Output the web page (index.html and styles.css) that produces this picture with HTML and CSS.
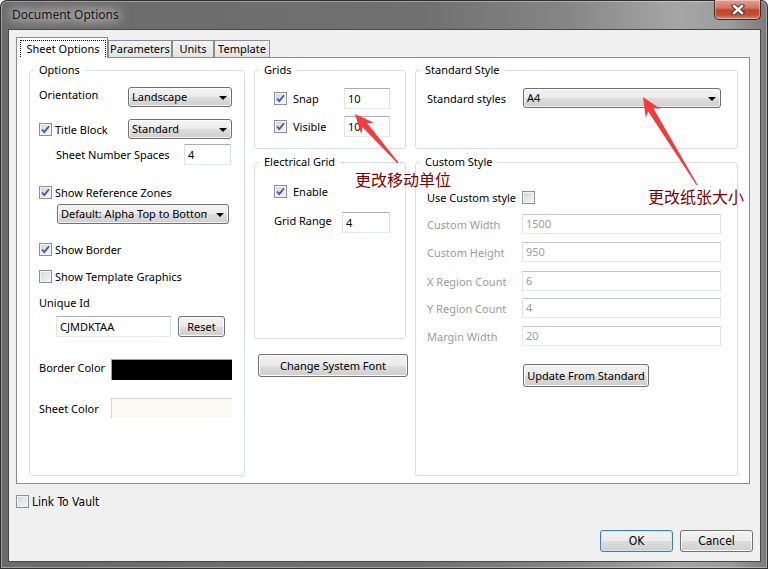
FILE: index.html
```html
<!DOCTYPE html>
<html>
<head>
    <title>Document Options</title>
    <meta charset="utf-8">
    <link rel="stylesheet" href="styles.css">
</head>
<body>
    <div class="window">
        <div class="titlebar">
            <span class="title">Document Options</span>
            <span class="close">
                <svg width="14" height="11" viewBox="0 0 14 11">
                    <path d="M3 2 L11 9 M11 2 L3 9" stroke="#3b3b3b" stroke-width="4.4" stroke-linecap="square"/>
                    <path d="M3 2 L11 9 M11 2 L3 9" stroke="#fff" stroke-width="2.4" stroke-linecap="square"/>
                </svg>
            </span>
        </div>

        <div class="client">
            <div class="tabs">
                <span class="tab active"><span class="focus">Sheet Options</span></span>
                <span class="tab params">Parameters</span>
                <span class="tab units">Units</span>
                <span class="tab template">Template</span>
            </div>

            <div class="page">
                <!-- left column -->
                <fieldset class="group options">
                    <legend>Options</legend>
                    <div class="row orient">
                        <span class="lbl w89 raised">Orientation</span>
                        <span class="combo w104">Landscape</span>
                    </div>
                    <div class="row title-block">
                        <span class="chk-label w89">
                            <span class="check"><svg width="11" height="11" viewBox="0 0 11 11"><path d="M2 5.5 L4.3 8 L9 2.2" fill="none" stroke="#3d5a98" stroke-width="1.8"/></svg></span>
                            Title Block
                        </span>
                        <span class="combo w104">Standard</span>
                    </div>
                    <div class="row sheet-spaces">
                        <span class="lbl w128">Sheet Number Spaces</span>
                        <span class="edit w47">4</span>
                    </div>
                    <div class="row ref-zones">
                        <span class="chk-label">
                            <span class="check"><svg width="11" height="11" viewBox="0 0 11 11"><path d="M2 5.5 L4.3 8 L9 2.2" fill="none" stroke="#3d5a98" stroke-width="1.8"/></svg></span>
                            Show Reference Zones
                        </span>
                    </div>
                    <div class="row zone-style">
                        <span class="combo w172"><span class="clip">Default: Alpha Top to Bottom</span></span>
                    </div>
                    <div class="row show-border">
                        <span class="chk-label">
                            <span class="check"><svg width="11" height="11" viewBox="0 0 11 11"><path d="M2 5.5 L4.3 8 L9 2.2" fill="none" stroke="#3d5a98" stroke-width="1.8"/></svg></span>
                            Show Border
                        </span>
                    </div>
                    <div class="row show-template">
                        <span class="chk-label">
                            <span class="check"></span>
                            Show Template Graphics
                        </span>
                    </div>
                    <div class="row unique-label">
                        <span class="lbl">Unique Id</span>
                    </div>
                    <div class="row unique-id">
                        <span class="edit w115">CJMDKTAA</span>
                        <span class="btn reset">Reset</span>
                    </div>
                    <div class="row border-color">
                        <span class="lbl w72 raised">Border Color</span>
                        <span class="swatch black"></span>
                    </div>
                    <div class="row sheet-color">
                        <span class="lbl w72">Sheet Color</span>
                        <span class="swatch sheet"></span>
                    </div>
                </fieldset>

                <!-- middle column -->
                <div class="col">
                    <fieldset class="group grids">
                        <legend>Grids</legend>
                        <div class="row snap">
                            <span class="chk-label w70 wide-gap">
                                <span class="check"><svg width="11" height="11" viewBox="0 0 11 11"><path d="M2 5.5 L4.3 8 L9 2.2" fill="none" stroke="#3d5a98" stroke-width="1.8"/></svg></span>
                                Snap
                            </span>
                            <span class="edit w46">10</span>
                        </div>
                        <div class="row visible">
                            <span class="chk-label w70 wide-gap">
                                <span class="check"><svg width="11" height="11" viewBox="0 0 11 11"><path d="M2 5.5 L4.3 8 L9 2.2" fill="none" stroke="#3d5a98" stroke-width="1.8"/></svg></span>
                                Visible
                            </span>
                            <span class="edit w46">10</span>
                        </div>
                    </fieldset>
                    <fieldset class="group electrical">
                        <legend>Electrical Grid</legend>
                        <div class="row enable">
                            <span class="chk-label wide-gap">
                                <span class="check"><svg width="11" height="11" viewBox="0 0 11 11"><path d="M2 5.5 L4.3 8 L9 2.2" fill="none" stroke="#3d5a98" stroke-width="1.8"/></svg></span>
                                Enable
                            </span>
                        </div>
                        <div class="row grid-range">
                            <span class="lbl w68 raised">Grid Range</span>
                            <span class="edit w48">4</span>
                        </div>
                    </fieldset>
                    <span class="btn font-btn">Change System Font</span>
                </div>

                <!-- right column -->
                <div class="col">
                    <fieldset class="group standard">
                        <legend>Standard Style</legend>
                        <div class="row std-styles">
                            <span class="lbl w96">Standard styles</span>
                            <span class="combo w198">A4</span>
                        </div>
                    </fieldset>
                    <fieldset class="group custom">
                        <legend>Custom Style</legend>
                        <div class="row use-custom">
                            <span class="lbl w95">Use Custom style</span>
                            <span class="check"></span>
                        </div>
                        <div class="row c-width">
                            <span class="lbl w95 off">Custom Width</span>
                            <span class="edit w199 off">1500</span>
                        </div>
                        <div class="row c-height">
                            <span class="lbl w95 off">Custom Height</span>
                            <span class="edit w199 off">950</span>
                        </div>
                        <div class="row x-region">
                            <span class="lbl w95 off">X Region Count</span>
                            <span class="edit w199 off">6</span>
                        </div>
                        <div class="row y-region">
                            <span class="lbl w95 off">Y Region Count</span>
                            <span class="edit w199 off">4</span>
                        </div>
                        <div class="row margin-width">
                            <span class="lbl w95 off">Margin Width</span>
                            <span class="edit w199 off">20</span>
                        </div>
                        <div class="row update">
                            <span class="btn update-btn">Update From Standard</span>
                        </div>
                    </fieldset>
                </div>
            </div>

            <div class="vault">
                <span class="check"></span>
                <span>Link To Vault</span>
            </div>

            <div class="actions">
                <span class="btn narrow default">OK</span>
                <span class="btn narrow">Cancel</span>
            </div>
        </div>

        <!-- callouts drawn on top of the dialog -->
        <svg class="arrows" width="768" height="569" viewBox="0 0 768 569">
            <polygon points="355,114 373.9,122.7 367.2,123.3 398.5,162.6 397.5,163.4 362.6,127.3 361.1,133.9" fill="#f23c3c"/>
            <polygon points="643,97 660.2,108.8 653.4,108.2 697.5,184.7 696.5,185.3 648.2,111.4 645.7,117.7" fill="#f23c3c"/>
        </svg>
        <span class="note note-grid">更改移动单位</span>
        <span class="note note-paper">更改纸张大小</span>
    </div>
</body>
</html>
```

FILE: styles.css
```css
* {
    box-sizing: border-box;
}
body {
    margin: 0;
    font-family: "Noto Sans", sans-serif;
    font-size: 11px;
    color: #000;
    background: #fff;
}

/* window frame */
.window {
    position: relative;
    width: 768px;
    height: 569px;
    padding: 0 7px 7px 8px;
    display: flex;
    flex-direction: column;
    border-radius: 7px 7px 0 0;
    background: linear-gradient(90deg, #6b6b6b 0%, #707070 55%, #868686 74%, #a6a6a6 88%, #9c9c9c 95%, #7a7a7a 100%);
    box-shadow: inset 0 0 0 1px #2e2e2e, inset 0 0 0 2px rgba(255, 255, 255, 0.35);
}
.titlebar {
    height: 29px;
    margin: 0 -7px 0 -8px;
    padding: 0 7px 0 12px;
    display: flex;
    justify-content: space-between;
    align-items: flex-start;
}
.title {
    margin-top: 6px;
    line-height: 17px;
    font-size: 12px;
    color: #151515;
    text-shadow: 0 0 8px #fff, 0 0 14px rgba(255, 255, 255, 0.9), 0 0 20px rgba(255, 255, 255, 0.6);
}
.close {
    width: 47px;
    height: 20px;
    display: flex;
    align-items: center;
    justify-content: center;
    border: 1px solid #4a2620;
    border-top: 0;
    border-radius: 0 0 5px 5px;
    background: linear-gradient(#e2a293 0%, #d57660 40%, #c1442c 55%, #c65038 80%, #d98e7c 100%);
    box-shadow: inset 0 0 0 1px rgba(255, 255, 255, 0.35);
}

.client {
    flex: 1;
    display: flex;
    flex-direction: column;
    background: #f0f0f0;
    border: 1px solid #464646;
}

/* tab strip */
.tabs {
    position: relative;
    z-index: 1;
    height: 20px;
    margin: 7px 0 0 7px;
    display: flex;
    align-items: flex-end;
}
.tab {
    height: 17px;
    border: 1px solid #898c95;
    border-bottom: 0;
    background: linear-gradient(#f3f3f3, #e3e3e3);
    text-align: center;
    line-height: 15px;
}
.tab.active {
    width: 92px;
    height: 21px;
    margin-bottom: -1px;
    background: #fff;
    padding: 2px 1px 0 3px;
}
.focus {
    display: block;
    height: 17px;
    line-height: 15px;
    border: 1px dotted #000;
    border-bottom: 0;
}
.tab.params { width: 64px; }
.tab.units { width: 42px; }
.tab.template { width: 56px; }

.page {
    height: 427px;
    margin: 0 10px 0 7px;
    padding: 5px 11px 7px 12px;
    display: grid;
    grid-template-columns: 216px 152px 323px;
    column-gap: 9px;
    background: #fff;
    border: 1px solid #898c95;
}
.col {
    display: flex;
    flex-direction: column;
}

/* group boxes */
.group {
    margin: 0;
    padding: 0;
    min-width: 0;
    border: 1px solid #d5dfe5;
    border-radius: 3px;
}
.group legend {
    margin-left: 4px;
    padding: 0 5px;
    line-height: 14px;
}
.options { height: 413px; }
.grids, .standard { height: 86px; flex: none; }
.electrical { height: 184px; margin-top: 6px; flex: none; }
.custom { margin-top: 6px; flex: 1; }

.row {
    display: flex;
    align-items: center;
}
.options .row { padding-left: 9px; }
.grids .row, .electrical .row { padding-left: 19px; }
.standard .row, .custom .row { padding-left: 11px; }

.orient { margin-top: 10px; height: 20px; }
.title-block { margin-top: 12px; height: 20px; }
.options .sheet-spaces { margin-top: 5px; height: 21px; padding-left: 26px; }
.ref-zones { margin-top: 21px; height: 13px; }
.options .zone-style { margin-top: 5px; height: 20px; padding-left: 27px; }
.show-border { margin-top: 19px; height: 13px; }
.show-template { margin-top: 14px; height: 13px; }
.unique-label { margin-top: 12px; height: 14px; }
.options .unique-id { margin-top: 7px; height: 21px; padding-left: 26px; gap: 7px; }
.border-color { margin-top: 22px; height: 21px; }
.sheet-color { margin-top: 18px; height: 20px; }

.snap { margin-top: 11px; height: 21px; }
.visible { margin-top: 7px; height: 21px; }
.enable { margin-top: 16px; height: 13px; }
.grid-range { margin-top: 14px; height: 21px; }

.std-styles { margin-top: 11px; height: 20px; }
.use-custom { margin-top: 22px; height: 13px; }
.c-width { margin-top: 10px; height: 20px; }
.c-height { margin-top: 8px; height: 20px; }
.x-region { margin-top: 9px; height: 20px; }
.y-region { margin-top: 7px; height: 20px; }
.margin-width { margin-top: 8px; height: 20px; }
.custom .update { margin-top: 18px; height: 23px; padding-left: 107px; }

/* fixed label / control widths */
.w47 { width: 47px; }
.w46 { width: 46px; }
.w48 { width: 48px; }
.w68 { width: 68px; }
.w70 { width: 70px; }
.w72 { width: 72px; }
.w89 { width: 89px; }
.w95 { width: 95px; }
.w96 { width: 96px; }
.w104 { width: 104px; }
.w115 { width: 115px; }
.w128 { width: 128px; }
.w172 { width: 172px; }
.w198 { width: 198px; }
.w199 { width: 199px; }

.lbl, .chk-label {
    flex: none;
    white-space: nowrap;
}
/* labels that sit a little above their control's middle */
.lbl.raised { padding-bottom: 5px; }
.chk-label {
    display: flex;
    align-items: center;
    gap: 3px;
}
.chk-label.wide-gap { gap: 6px; }
.off { color: #9c9c9c; }

/* controls */
.check {
    width: 13px;
    height: 13px;
    flex: none;
    display: inline-flex;
    align-items: center;
    justify-content: center;
    border: 1px solid #8e8f8f;
    background: linear-gradient(135deg, #d0d4da, #f7f7f7);
    box-shadow: inset 0 0 0 1px #f4f4f4;
}
.edit {
    flex: none;
    height: 21px;
    padding: 0 3px;
    line-height: 19px;
    background: #fff;
    border: 1px solid;
    border-color: #abadb3 #dbdfe6 #e3e9ef #e2e3ea;
}
.custom .edit { height: 20px; line-height: 18px; }
.edit.off { border-color: #c4c6cb #dfe1e5 #e5e8ec #e2e3e7; }

.combo {
    position: relative;
    flex: none;
    height: 20px;
    padding: 0 18px 0 3px;
    line-height: 18px;
    white-space: nowrap;
    overflow: hidden;
    border: 1px solid #707070;
    border-radius: 3px;
    background: linear-gradient(#f3f3f3 0%, #ebebeb 50%, #dddddd 51%, #cfcfcf 100%);
    box-shadow: inset 0 0 0 1px rgba(255, 255, 255, 0.7);
}
.combo::after {
    content: "";
    position: absolute;
    right: 4px;
    top: 8px;
    border-left: 4px solid transparent;
    border-right: 4px solid transparent;
    border-top: 4px solid #000;
}
.clip {
    display: block;
    width: 146px;
    overflow: hidden;
}

.btn {
    flex: none;
    height: 21px;
    text-align: center;
    line-height: 19px;
    white-space: nowrap;
    border: 1px solid #707070;
    border-radius: 3px;
    background: linear-gradient(#f2f2f2 0%, #ebebeb 50%, #dddddd 51%, #cfcfcf 100%);
    box-shadow: inset 0 0 0 1px #fbfbfb;
}
.reset { width: 47px; }
.font-btn {
    width: 150px;
    height: 23px;
    line-height: 21px;
    margin: 15px 0 0 4px;
}
.update-btn {
    width: 126px;
    height: 23px;
    line-height: 21px;
}

.swatch {
    width: 121px;
    height: 21px;
    border-top: 1px solid #a0a0a0;
    border-left: 1px solid #a0a0a0;
}
.swatch.black { background: #000; }
.swatch.sheet { height: 20px; background: #fdfaf6; border-color: #d6d6d6; }

/* footer */
.vault {
    height: 13px;
    margin: 11px 0 0 7px;
    display: flex;
    align-items: center;
    gap: 3px;
    font-family: "DejaVu Sans Condensed", "DejaVu Sans", sans-serif;
    font-stretch: condensed;
    font-size: 12px;
}
.actions {
    margin-top: 22px;
    padding-right: 7px;
    display: flex;
    justify-content: flex-end;
    gap: 7px;
}
.btn.narrow {
    width: 73px;
    height: 22px;
    line-height: 20px;
    font-family: "DejaVu Sans Condensed", "DejaVu Sans", sans-serif;
    font-stretch: condensed;
    font-size: 12px;
}
.btn.default {
    border-color: #3c7fb1;
    box-shadow: inset 0 0 0 1px #c8e8f8;
}

/* annotations */
.arrows {
    position: absolute;
    left: 0;
    top: 0;
    pointer-events: none;
}
.note {
    position: absolute;
    font-family: "Noto Sans CJK SC", sans-serif;
    font-size: 16px;
    line-height: 16px;
    color: #7d0000;
    white-space: nowrap;
}
.note-grid { left: 355px; top: 171px; }
.note-paper { left: 648px; top: 188px; }
```
